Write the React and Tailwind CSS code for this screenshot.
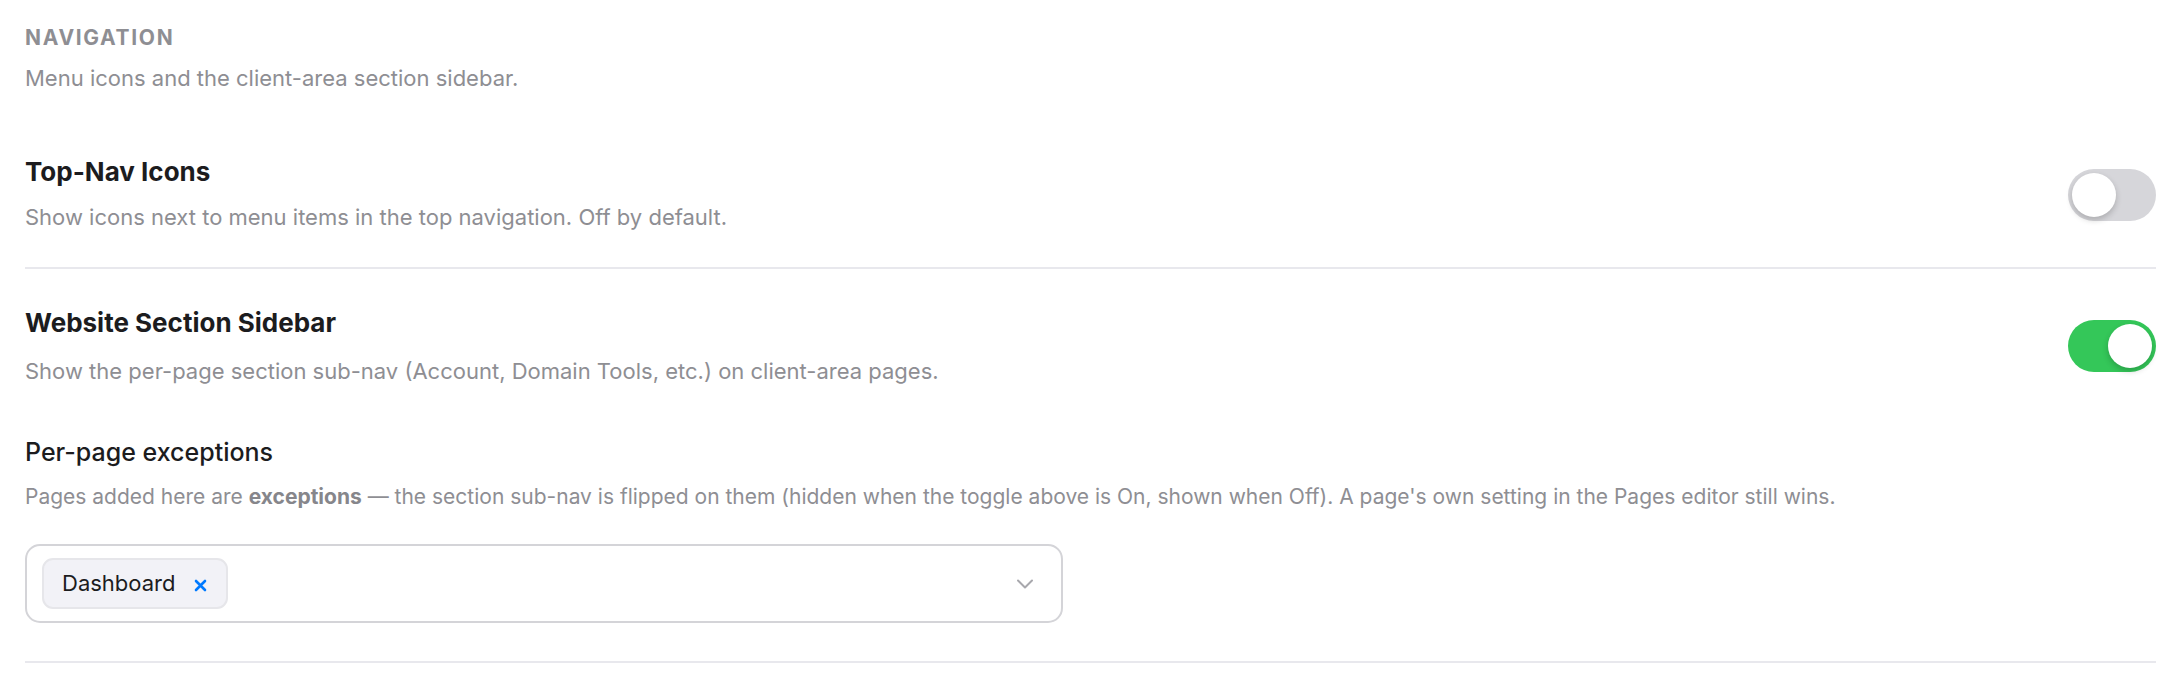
import React from "react";

function Toggle({ on }) {
  return (
    <div
      className={
        "relative mt-[15px] w-[88px] h-[52px] rounded-full shrink-0 " +
        (on ? "bg-[#34c759]" : "bg-[#d6d6da]")
      }
    >
      <div
        className={
          "absolute top-[4px] w-[44px] h-[44px] rounded-full bg-white shadow-[0_3px_6px_rgba(0,0,0,0.2)] " +
          (on ? "right-[4px]" : "left-[4px]")
        }
      />
    </div>
  );
}

export default function App() {
  return (
    <div
      className="bg-white min-h-[686px] pl-[25px] pr-[24px] pt-[25px]"
      style={{ fontFamily: "Inter, 'Noto Sans', sans-serif" }}
    >
      <div className="text-[21px] leading-[26px] font-bold tracking-[0.08em] text-[#8e8e93]">
        NAVIGATION
      </div>
      <div className="mt-[10px] text-[22px] leading-[34px] text-[#8e8e93]">
        Menu icons and the client-area section sidebar.
      </div>

      <div className="mt-[59px] flex items-start justify-between pb-[33px] border-b-2 border-[#e8e8ed]">
        <div className="flex flex-col gap-[11px]">
          <div className="text-[26px] leading-[35px] font-bold text-[#1c1c1e]">
            Top-Nav Icons
          </div>
          <div className="text-[22px] leading-[34px] text-[#8e8e93]">
            Show icons next to menu items in the top navigation. Off by default.
          </div>
        </div>
        <Toggle on={false} />
      </div>

      <div className="pt-[36px] pb-[38px] border-b-2 border-[#e8e8ed]">
        <div className="flex items-start justify-between">
          <div className="flex flex-col gap-[13px]">
            <div className="text-[26px] leading-[36px] font-bold text-[#1c1c1e]">
              Website Section Sidebar
            </div>
            <div className="text-[22px] leading-[34px] text-[#8e8e93]">
              Show the per-page section sub-nav (Account, Domain Tools, etc.) on client-area pages.
            </div>
          </div>
          <Toggle on={true} />
        </div>

        <div className="mt-[47px] text-[25px] leading-[35px] font-medium text-[#1c1c1e]">
          Per-page exceptions
        </div>
        <div className="mt-[11px] text-[21px] leading-[32px] text-[#8e8e93]">
          Pages added here are{" "}
          <span className="font-bold text-[#86868b]">exceptions</span> — the
          section sub-nav is flipped on them (hidden when the toggle above is On,
          shown when Off). A page's own setting in the Pages editor still wins.
        </div>

        <div className="mt-[31px] w-[1038px] h-[79px] rounded-[15px] border-2 border-[#d4d4d8] flex items-center justify-between pl-[15px] pr-[28px]">
          <div className="h-[51px] rounded-[11px] bg-[#f2f2f7] border-2 border-[#e6e6ea] flex items-center pl-[18px] pr-[19px] gap-[19px]">
            <span className="text-[22px] text-[#1c1c1e]">Dashboard</span>
            <svg width="13" height="13" viewBox="0 0 13 13" className="mt-[3px]">
              <path d="M2 2 L11 11 M11 2 L2 11" stroke="#007aff" strokeWidth="2.6" strokeLinecap="round" />
            </svg>
          </div>
          <svg width="16" height="10" viewBox="0 0 16 10">
            <path d="M1 1.5 L8 8.5 L15 1.5" fill="none" stroke="#a8a8ad" strokeWidth="2" strokeLinecap="round" strokeLinejoin="round" />
          </svg>
        </div>
      </div>
    </div>
  );
}
